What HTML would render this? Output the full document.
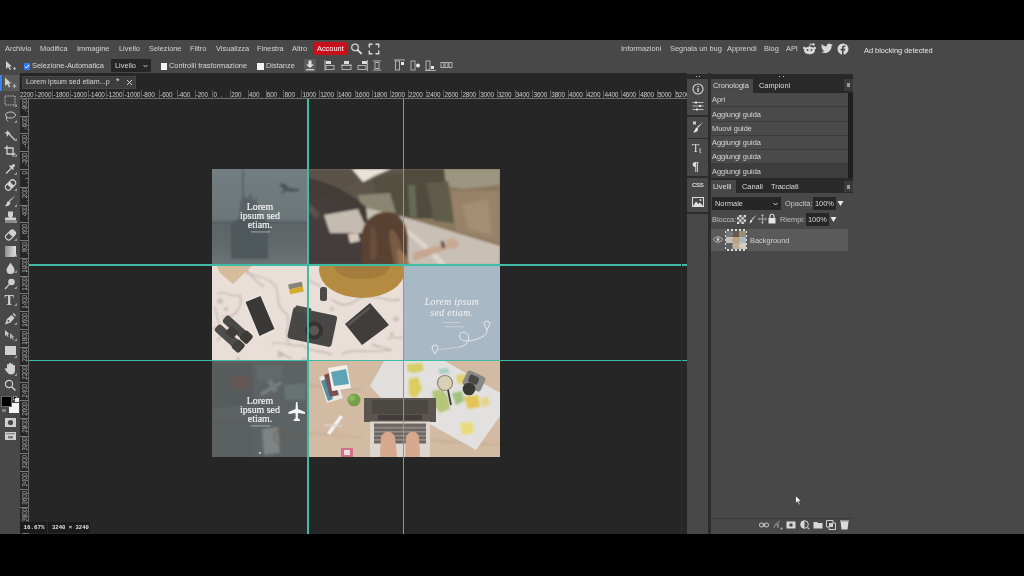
<!DOCTYPE html>
<html><head><meta charset="utf-8">
<style>
*{box-sizing:border-box;margin:0;padding:0}
html,body{width:1024px;height:576px;overflow:hidden;background:#000}
body{position:relative;font-family:"Liberation Sans",sans-serif;color:#dcdcdc}
.a{position:absolute}
.t{position:absolute;white-space:nowrap;font-size:7.4px;line-height:9px;color:#d8d8d8}
#app{left:0;top:40px;width:1024px;height:494px;background:#484848;filter:blur(0.45px)}
.rl{position:absolute;top:1.5px;font-size:6.4px;line-height:8px;color:#cdcdcd;white-space:nowrap;letter-spacing:-0.15px}
.rlv{position:absolute;left:1px;font-size:6.4px;line-height:7px;color:#a8a8a8;white-space:nowrap;writing-mode:vertical-rl;transform:rotate(180deg);letter-spacing:-0.15px}
.hr{left:0;width:137px;height:14.3px;background:#4a4a4a;border-bottom:1px solid #3b3b3b}
.menu span{position:absolute;top:4px;white-space:nowrap;font-size:7.4px;line-height:9px;color:#d4d4d4}
</style></head><body>
<div id="app" class="a">

  <!-- OPTIONS BAR -->
  <div class="a" style="left:0;top:16.7px;width:1024px;height:17px">
    <svg class="a" style="left:5px;top:4px" width="12" height="10" viewBox="0 0 12 10"><path d="M1 0 L1 8 L3 6 L5 9 L6 8.5 L4.5 5.5 L7 5.5 Z" fill="#cfcfcf"/><path d="M8 7.5h3M9.5 6v3" stroke="#cfcfcf" stroke-width="0.8"/></svg>
    <div class="a" style="left:24px;top:6px;width:6px;height:7px;background:#2f7cf6;border-radius:1px"></div>
    <svg class="a" style="left:24px;top:6px" width="6" height="7" viewBox="0 0 6 7"><path d="M1 3.5 L2.5 5 L5 1.8" stroke="#fff" stroke-width="1" fill="none"/></svg>
    <span class="t" style="left:32px;top:4px">Selezione-Automatica</span>
    <div class="a" style="left:111px;top:2px;width:40px;height:13px;background:#262626"></div>
    <span class="t" style="left:115px;top:4px">Livello</span>
    <svg class="a" style="left:143px;top:7px" width="5" height="4" viewBox="0 0 5 4"><path d="M0.5 1 L2.5 3 L4.5 1" stroke="#ddd" stroke-width="0.9" fill="none"/></svg>
    <div class="a" style="left:161px;top:6px;width:6px;height:7px;background:#f2f2f2"></div>
    <span class="t" style="left:169px;top:4px">Controlli trasformazione</span>
    <div class="a" style="left:257px;top:6px;width:7px;height:7px;background:#f2f2f2"></div>
    <span class="t" style="left:266px;top:4px">Distanze</span>
    <div class="a" style="left:304px;top:2px;width:12px;height:13px;background:#5a5a5a"></div>
    <svg class="a" style="left:305px;top:3px" width="10" height="11" viewBox="0 0 10 11"><path d="M3.5 0.5h3v4h2.5L5 8 1 4.5h2.5z" fill="#e0e0e0"/><rect x="1" y="9" width="8" height="1.3" fill="#d0d0d0"/></svg>
    <svg class="a" style="left:324px;top:3px" width="11" height="11" viewBox="0 0 11 11"><rect x="0.5" y="0" width="1" height="11" fill="#bbb"/><rect x="2" y="1" width="5" height="3" fill="#ddd"/><rect x="2" y="5.5" width="8" height="4" fill="none" stroke="#bbb" stroke-width="0.9"/></svg>
    <svg class="a" style="left:341px;top:3px" width="11" height="11" viewBox="0 0 11 11"><rect x="3" y="1" width="5" height="3" fill="#ddd"/><rect x="1" y="5.5" width="9" height="4" fill="none" stroke="#bbb" stroke-width="0.9"/><rect x="0" y="4.6" width="11" height="0.8" fill="#bbb"/></svg>
    <svg class="a" style="left:357px;top:3px" width="11" height="11" viewBox="0 0 11 11"><rect x="5" y="1" width="5" height="3" fill="#ddd"/><rect x="1" y="5.5" width="8" height="4" fill="none" stroke="#bbb" stroke-width="0.9"/><rect x="9.8" y="0" width="1" height="11" fill="#bbb"/></svg>
    <svg class="a" style="left:373px;top:3px" width="8" height="11" viewBox="0 0 8 11"><rect x="0" y="0.5" width="8" height="0.9" fill="#bbb"/><rect x="0" y="9.6" width="8" height="0.9" fill="#bbb"/><rect x="2" y="2.5" width="4" height="6" fill="none" stroke="#bbb" stroke-width="0.9"/></svg>
    <svg class="a" style="left:394px;top:2px" width="12" height="12" viewBox="0 0 12 12"><rect x="0" y="0.5" width="11" height="0.9" fill="#bbb"/><rect x="1.5" y="2" width="4" height="9" fill="none" stroke="#bbb" stroke-width="0.9"/><rect x="7" y="3" width="3" height="3" fill="#e8e8e8"/></svg>
    <svg class="a" style="left:410px;top:2px" width="11" height="12" viewBox="0 0 11 12"><rect x="1" y="2" width="4" height="9" fill="none" stroke="#bbb" stroke-width="0.9"/><circle cx="8" cy="6.5" r="2" fill="#e8e8e8"/></svg>
    <svg class="a" style="left:425px;top:2px" width="11" height="12" viewBox="0 0 11 12"><rect x="1" y="2" width="4" height="9" fill="none" stroke="#bbb" stroke-width="0.9"/><rect x="6" y="7" width="3" height="3" fill="#e8e8e8"/><rect x="0" y="11" width="11" height="0.9" fill="#bbb"/></svg>
    <svg class="a" style="left:440px;top:3px" width="13" height="10" viewBox="0 0 13 10"><rect x="1" y="2.5" width="3" height="5" fill="none" stroke="#bbb" stroke-width="0.9"/><rect x="5" y="2.5" width="3" height="5" fill="none" stroke="#bbb" stroke-width="0.9"/><rect x="9" y="2.5" width="3" height="5" fill="none" stroke="#bbb" stroke-width="0.9"/></svg>
  </div>

  <!-- LEFT TOOLBAR -->
  <div class="a" id="tools" style="left:0;top:33px;width:20px;height:461px;background:#484848">
    <div class="a" style="left:0;top:2px;width:2px;height:16px;background:#3a86f0"></div>
    <div class="a" style="left:3px;top:2px;width:16px;height:16px;background:#5a5a5a"></div>
    <svg class="a" style="left:4px;top:4px" width="13" height="12" viewBox="0 0 13 12"><path d="M1 0.5 L1 9 L3.2 7 L5 10.5 L6.3 9.8 L4.6 6.5 L7.5 6.5 Z" fill="#d0d0d0"/><path d="M8.5 9h4M10.5 7v4" stroke="#d0d0d0" stroke-width="0.8"/></svg>
    <svg class="a" style="left:4px;top:22px" width="13" height="12" viewBox="0 0 13 12"><rect x="1" y="1" width="10" height="9" fill="none" stroke="#d0d0d0" stroke-width="0.9" stroke-dasharray="1.5 1"/></svg><svg class="a" style="left:14px;top:31px" width="3" height="3" viewBox="0 0 3 3"><path d="M3 0V3H0Z" fill="#999"/></svg>
    <svg class="a" style="left:4px;top:38px" width="13" height="12" viewBox="0 0 13 12"><ellipse cx="6.5" cy="4" rx="5" ry="3" fill="none" stroke="#d0d0d0" stroke-width="0.9"/><path d="M2.5 6 C2 8 3 9 4 10.5" fill="none" stroke="#d0d0d0" stroke-width="0.9"/></svg><svg class="a" style="left:14px;top:47px" width="3" height="3" viewBox="0 0 3 3"><path d="M3 0V3H0Z" fill="#999"/></svg>
    <svg class="a" style="left:4px;top:56px" width="13" height="12" viewBox="0 0 13 12"><path d="M5 5 L11 11" stroke="#d0d0d0" stroke-width="1.2"/><path d="M3.5 1 L5 3.5 L7 4 L4.5 5.5 L3 8 L2.5 5 L0.5 3.5 L3 3Z" fill="#d0d0d0"/></svg><svg class="a" style="left:14px;top:65px" width="3" height="3" viewBox="0 0 3 3"><path d="M3 0V3H0Z" fill="#999"/></svg>
    <svg class="a" style="left:4px;top:72px" width="13" height="12" viewBox="0 0 13 12"><path d="M3 0.5V9H11.5M0.5 3H9V11.5" fill="none" stroke="#d0d0d0" stroke-width="1.3"/></svg><svg class="a" style="left:14px;top:81px" width="3" height="3" viewBox="0 0 3 3"><path d="M3 0V3H0Z" fill="#999"/></svg>
    <svg class="a" style="left:4px;top:90px" width="13" height="12" viewBox="0 0 13 12"><path d="M2 10.5 L7.5 5" stroke="#d0d0d0" stroke-width="1.3"/><path d="M7 3 L9.5 0.8 L11.3 2.6 L9 5 L10 6 L9 7 L5 3 L6 2Z" fill="#d0d0d0"/></svg><svg class="a" style="left:14px;top:99px" width="3" height="3" viewBox="0 0 3 3"><path d="M3 0V3H0Z" fill="#999"/></svg>
    <svg class="a" style="left:4px;top:106px" width="13" height="12" viewBox="0 0 13 12"><g transform="rotate(45 6.5 6)"><rect x="3.5" y="0" width="6" height="12" rx="3" fill="none" stroke="#d0d0d0" stroke-width="1.1"/><rect x="3.5" y="4" width="6" height="4" fill="#d0d0d0"/></g></svg><svg class="a" style="left:14px;top:115px" width="3" height="3" viewBox="0 0 3 3"><path d="M3 0V3H0Z" fill="#999"/></svg>
    <svg class="a" style="left:4px;top:122px" width="13" height="12" viewBox="0 0 13 12"><path d="M11.5 0.5 L6 6.5 L5 5.5Z" fill="#d0d0d0"/><path d="M4.6 6 C2.5 6.5 3 9.5 0.8 11.3 C4 11.5 6.8 9.8 6.3 7Z" fill="#d0d0d0"/></svg><svg class="a" style="left:14px;top:131px" width="3" height="3" viewBox="0 0 3 3"><path d="M3 0V3H0Z" fill="#999"/></svg>
    <svg class="a" style="left:4px;top:138px" width="13" height="12" viewBox="0 0 13 12"><path d="M4 0.5h5v4.5l-1 1.5h4v3H1v-3h4l-1-1.5z" fill="#d0d0d0"/><rect x="1" y="10.5" width="11" height="1" fill="#d0d0d0"/></svg><svg class="a" style="left:14px;top:147px" width="3" height="3" viewBox="0 0 3 3"><path d="M3 0V3H0Z" fill="#999"/></svg>
    <svg class="a" style="left:4px;top:156px" width="13" height="12" viewBox="0 0 13 12"><g transform="rotate(-45 6.5 6)"><rect x="1" y="3" width="11" height="6" rx="2.5" fill="none" stroke="#d0d0d0" stroke-width="1.1"/><rect x="6.5" y="3" width="5.5" height="6" rx="2" fill="#d0d0d0"/></g></svg><svg class="a" style="left:14px;top:165px" width="3" height="3" viewBox="0 0 3 3"><path d="M3 0V3H0Z" fill="#999"/></svg>
    <div class="a" style="left:5px;top:173px;width:11px;height:11px;background:linear-gradient(90deg,#909090,#e0e0e0)"></div><svg class="a" style="left:14px;top:181px" width="3" height="3" viewBox="0 0 3 3"><path d="M3 0V3H0Z" fill="#999"/></svg>
    <svg class="a" style="left:4px;top:189px" width="13" height="12" viewBox="0 0 13 12"><path d="M6.5 0.5 C8 3.5 10.5 5.5 10.5 8 A4 4 0 0 1 2.5 8 C2.5 5.5 5 3.5 6.5 0.5Z" fill="#d0d0d0"/></svg><svg class="a" style="left:14px;top:197px" width="3" height="3" viewBox="0 0 3 3"><path d="M3 0V3H0Z" fill="#999"/></svg>
    <svg class="a" style="left:4px;top:205px" width="13" height="12" viewBox="0 0 13 12"><circle cx="7.5" cy="4" r="3.3" fill="#d0d0d0"/><path d="M5.3 6.3 L1 11" stroke="#d0d0d0" stroke-width="1.2"/></svg><svg class="a" style="left:14px;top:213px" width="3" height="3" viewBox="0 0 3 3"><path d="M3 0V3H0Z" fill="#999"/></svg>
    <span class="a" style="left:4.5px;top:220px;font-family:'Liberation Serif',serif;font-size:14px;line-height:15px;color:#d0d0d0;font-weight:bold">T</span><svg class="a" style="left:14px;top:230px" width="3" height="3" viewBox="0 0 3 3"><path d="M3 0V3H0Z" fill="#999"/></svg>
    <svg class="a" style="left:4px;top:240px" width="13" height="12" viewBox="0 0 13 12"><path d="M1 11.5 L3 6 L7.5 2 L10.5 5 L6.5 9.5Z" fill="#d0d0d0"/><path d="M8.5 1 L9.5 0 L12 2.5 L11 3.5Z" fill="#d0d0d0"/><circle cx="4.5" cy="8" r="0.9" fill="#484848"/></svg><svg class="a" style="left:14px;top:249px" width="3" height="3" viewBox="0 0 3 3"><path d="M3 0V3H0Z" fill="#999"/></svg>
    <svg class="a" style="left:4px;top:256px" width="13" height="12" viewBox="0 0 13 12"><path d="M1 1 L1 7 L2.5 5.7 L3.8 8 L4.6 7.6 L3.5 5.2 L5.5 5.2Z" fill="#d0d0d0"/><path d="M6 4 L6 10 L7.5 8.7 L8.8 11 L9.6 10.6 L8.5 8.2 L10.5 8.2Z" fill="#d0d0d0" opacity="0.8"/></svg><svg class="a" style="left:14px;top:265px" width="3" height="3" viewBox="0 0 3 3"><path d="M3 0V3H0Z" fill="#999"/></svg>
    <div class="a" style="left:5px;top:273px;width:11px;height:9px;background:#d0d0d0"></div><svg class="a" style="left:14px;top:282px" width="3" height="3" viewBox="0 0 3 3"><path d="M3 0V3H0Z" fill="#999"/></svg>
    <svg class="a" style="left:4px;top:289px" width="13" height="13" viewBox="0 0 13 13"><path d="M3 7 V3 a1 1 0 0 1 2 0 V6 V1.8 a1 1 0 0 1 2 0 V6 V2.5 a1 1 0 0 1 2 0 V6.5 V4 a1 1 0 0 1 2 0 V8.5 C11 11 9.5 12.5 7 12.5 C5 12.5 4 11.5 3 10 L1 7.5 a1 1 0 0 1 1.5 -1.2Z" fill="#d0d0d0"/></svg><svg class="a" style="left:14px;top:300px" width="3" height="3" viewBox="0 0 3 3"><path d="M3 0V3H0Z" fill="#999"/></svg>
    <svg class="a" style="left:4px;top:306px" width="13" height="13" viewBox="0 0 13 13"><circle cx="5" cy="5" r="3.6" fill="none" stroke="#d0d0d0" stroke-width="1.2"/><path d="M7.7 7.7 L11.5 11.5" stroke="#d0d0d0" stroke-width="1.5"/></svg>
    <div class="a" style="left:9px;top:330px;width:10px;height:10px;background:#f4f4f4"></div>
    <div class="a" style="left:1px;top:323px;width:11px;height:11px;background:#000;border:0.5px solid #666"></div>
    <div class="a" style="left:13px;top:323px;width:4px;height:4px;background:#000;border:0.5px solid #888"></div><div class="a" style="left:15px;top:325px;width:4px;height:4px;background:#eee"></div>
    <div class="a" style="left:2px;top:336px;width:4px;height:3px;background:#aaa;opacity:0.6"></div>
    <svg class="a" style="left:4px;top:344px" width="13" height="11" viewBox="0 0 13 11"><rect x="1" y="1" width="11" height="9" fill="#d0d0d0"/><circle cx="6.5" cy="5.5" r="2.6" fill="#484848"/></svg>
    <svg class="a" style="left:4px;top:358px" width="13" height="10" viewBox="0 0 13 10"><rect x="1" y="1" width="11" height="8" fill="#d0d0d0"/><rect x="2" y="2.2" width="9" height="1" fill="#777"/><rect x="4" y="5" width="5" height="2.5" fill="#777"/></svg>
  </div>
  <!-- CANVAS AREA -->
  <div class="a" id="work" style="left:20px;top:33px;width:667px;height:461px;background:#262626;overflow:hidden">
    <div class="a" style="left:2px;top:2.5px;width:114px;height:13.5px;background:#3d3d3d;border:1px solid #474747"></div>
    <span class="t" style="left:6px;top:5px;color:#d6d6d6;font-size:7.1px">Lorem ipsum sed etiam...p</span>
    <span class="t" style="left:96px;top:4px;color:#e0e0e0;font-size:9px">*</span>
    <svg class="a" style="left:106px;top:6px" width="7" height="7" viewBox="0 0 7 7"><path d="M1 1L6 6M6 1L1 6" stroke="#d0d0d0" stroke-width="1"/></svg>
    <!-- h ruler -->
    <div class="a" id="hr" style="left:0;top:16px;width:667px;height:10px;background:#262626;border-bottom:1px solid #6c6c6c;overflow:hidden"><div class="a" style="left:-3.3px;top:1px;width:1px;height:9px;background:#5a5a5a"></div><span class="rl" style="left:-2.1px">-2200</span><div class="a" style="left:1.2px;top:8px;width:1px;height:2px;background:#555"></div><div class="a" style="left:5.6px;top:7px;width:1px;height:3px;background:#555"></div><div class="a" style="left:10.1px;top:8px;width:1px;height:2px;background:#555"></div><div class="a" style="left:14.5px;top:1px;width:1px;height:9px;background:#5a5a5a"></div><span class="rl" style="left:15.7px">-2000</span><div class="a" style="left:19.0px;top:8px;width:1px;height:2px;background:#555"></div><div class="a" style="left:23.4px;top:7px;width:1px;height:3px;background:#555"></div><div class="a" style="left:27.9px;top:8px;width:1px;height:2px;background:#555"></div><div class="a" style="left:32.3px;top:1px;width:1px;height:9px;background:#5a5a5a"></div><span class="rl" style="left:33.5px">-1800</span><div class="a" style="left:36.7px;top:8px;width:1px;height:2px;background:#555"></div><div class="a" style="left:41.2px;top:7px;width:1px;height:3px;background:#555"></div><div class="a" style="left:45.6px;top:8px;width:1px;height:2px;background:#555"></div><div class="a" style="left:50.1px;top:1px;width:1px;height:9px;background:#5a5a5a"></div><span class="rl" style="left:51.3px">-1600</span><div class="a" style="left:54.5px;top:8px;width:1px;height:2px;background:#555"></div><div class="a" style="left:59.0px;top:7px;width:1px;height:3px;background:#555"></div><div class="a" style="left:63.4px;top:8px;width:1px;height:2px;background:#555"></div><div class="a" style="left:67.9px;top:1px;width:1px;height:9px;background:#5a5a5a"></div><span class="rl" style="left:69.1px">-1400</span><div class="a" style="left:72.3px;top:8px;width:1px;height:2px;background:#555"></div><div class="a" style="left:76.7px;top:7px;width:1px;height:3px;background:#555"></div><div class="a" style="left:81.2px;top:8px;width:1px;height:2px;background:#555"></div><div class="a" style="left:85.6px;top:1px;width:1px;height:9px;background:#5a5a5a"></div><span class="rl" style="left:86.8px">-1200</span><div class="a" style="left:90.1px;top:8px;width:1px;height:2px;background:#555"></div><div class="a" style="left:94.5px;top:7px;width:1px;height:3px;background:#555"></div><div class="a" style="left:99.0px;top:8px;width:1px;height:2px;background:#555"></div><div class="a" style="left:103.4px;top:1px;width:1px;height:9px;background:#5a5a5a"></div><span class="rl" style="left:104.6px">-1000</span><div class="a" style="left:107.9px;top:8px;width:1px;height:2px;background:#555"></div><div class="a" style="left:112.3px;top:7px;width:1px;height:3px;background:#555"></div><div class="a" style="left:116.7px;top:8px;width:1px;height:2px;background:#555"></div><div class="a" style="left:121.2px;top:1px;width:1px;height:9px;background:#5a5a5a"></div><span class="rl" style="left:122.4px">-800</span><div class="a" style="left:125.6px;top:8px;width:1px;height:2px;background:#555"></div><div class="a" style="left:130.1px;top:7px;width:1px;height:3px;background:#555"></div><div class="a" style="left:134.5px;top:8px;width:1px;height:2px;background:#555"></div><div class="a" style="left:139.0px;top:1px;width:1px;height:9px;background:#5a5a5a"></div><span class="rl" style="left:140.2px">-600</span><div class="a" style="left:143.4px;top:8px;width:1px;height:2px;background:#555"></div><div class="a" style="left:147.9px;top:7px;width:1px;height:3px;background:#555"></div><div class="a" style="left:152.3px;top:8px;width:1px;height:2px;background:#555"></div><div class="a" style="left:156.7px;top:1px;width:1px;height:9px;background:#5a5a5a"></div><span class="rl" style="left:157.9px">-400</span><div class="a" style="left:161.2px;top:8px;width:1px;height:2px;background:#555"></div><div class="a" style="left:165.6px;top:7px;width:1px;height:3px;background:#555"></div><div class="a" style="left:170.1px;top:8px;width:1px;height:2px;background:#555"></div><div class="a" style="left:174.5px;top:1px;width:1px;height:9px;background:#5a5a5a"></div><span class="rl" style="left:175.7px">-200</span><div class="a" style="left:179.0px;top:8px;width:1px;height:2px;background:#555"></div><div class="a" style="left:183.4px;top:7px;width:1px;height:3px;background:#555"></div><div class="a" style="left:187.9px;top:8px;width:1px;height:2px;background:#555"></div><div class="a" style="left:192.3px;top:1px;width:1px;height:9px;background:#5a5a5a"></div><span class="rl" style="left:193.5px">0</span><div class="a" style="left:196.7px;top:8px;width:1px;height:2px;background:#555"></div><div class="a" style="left:201.2px;top:7px;width:1px;height:3px;background:#555"></div><div class="a" style="left:205.6px;top:8px;width:1px;height:2px;background:#555"></div><div class="a" style="left:210.1px;top:1px;width:1px;height:9px;background:#5a5a5a"></div><span class="rl" style="left:211.3px">200</span><div class="a" style="left:214.5px;top:8px;width:1px;height:2px;background:#555"></div><div class="a" style="left:219.0px;top:7px;width:1px;height:3px;background:#555"></div><div class="a" style="left:223.4px;top:8px;width:1px;height:2px;background:#555"></div><div class="a" style="left:227.9px;top:1px;width:1px;height:9px;background:#5a5a5a"></div><span class="rl" style="left:229.1px">400</span><div class="a" style="left:232.3px;top:8px;width:1px;height:2px;background:#555"></div><div class="a" style="left:236.7px;top:7px;width:1px;height:3px;background:#555"></div><div class="a" style="left:241.2px;top:8px;width:1px;height:2px;background:#555"></div><div class="a" style="left:245.6px;top:1px;width:1px;height:9px;background:#5a5a5a"></div><span class="rl" style="left:246.8px">600</span><div class="a" style="left:250.1px;top:8px;width:1px;height:2px;background:#555"></div><div class="a" style="left:254.5px;top:7px;width:1px;height:3px;background:#555"></div><div class="a" style="left:259.0px;top:8px;width:1px;height:2px;background:#555"></div><div class="a" style="left:263.4px;top:1px;width:1px;height:9px;background:#5a5a5a"></div><span class="rl" style="left:264.6px">800</span><div class="a" style="left:267.9px;top:8px;width:1px;height:2px;background:#555"></div><div class="a" style="left:272.3px;top:7px;width:1px;height:3px;background:#555"></div><div class="a" style="left:276.7px;top:8px;width:1px;height:2px;background:#555"></div><div class="a" style="left:281.2px;top:1px;width:1px;height:9px;background:#5a5a5a"></div><span class="rl" style="left:282.4px">1000</span><div class="a" style="left:285.6px;top:8px;width:1px;height:2px;background:#555"></div><div class="a" style="left:290.1px;top:7px;width:1px;height:3px;background:#555"></div><div class="a" style="left:294.5px;top:8px;width:1px;height:2px;background:#555"></div><div class="a" style="left:299.0px;top:1px;width:1px;height:9px;background:#5a5a5a"></div><span class="rl" style="left:300.2px">1200</span><div class="a" style="left:303.4px;top:8px;width:1px;height:2px;background:#555"></div><div class="a" style="left:307.9px;top:7px;width:1px;height:3px;background:#555"></div><div class="a" style="left:312.3px;top:8px;width:1px;height:2px;background:#555"></div><div class="a" style="left:316.7px;top:1px;width:1px;height:9px;background:#5a5a5a"></div><span class="rl" style="left:317.9px">1400</span><div class="a" style="left:321.2px;top:8px;width:1px;height:2px;background:#555"></div><div class="a" style="left:325.6px;top:7px;width:1px;height:3px;background:#555"></div><div class="a" style="left:330.1px;top:8px;width:1px;height:2px;background:#555"></div><div class="a" style="left:334.5px;top:1px;width:1px;height:9px;background:#5a5a5a"></div><span class="rl" style="left:335.7px">1600</span><div class="a" style="left:339.0px;top:8px;width:1px;height:2px;background:#555"></div><div class="a" style="left:343.4px;top:7px;width:1px;height:3px;background:#555"></div><div class="a" style="left:347.9px;top:8px;width:1px;height:2px;background:#555"></div><div class="a" style="left:352.3px;top:1px;width:1px;height:9px;background:#5a5a5a"></div><span class="rl" style="left:353.5px">1800</span><div class="a" style="left:356.7px;top:8px;width:1px;height:2px;background:#555"></div><div class="a" style="left:361.2px;top:7px;width:1px;height:3px;background:#555"></div><div class="a" style="left:365.6px;top:8px;width:1px;height:2px;background:#555"></div><div class="a" style="left:370.1px;top:1px;width:1px;height:9px;background:#5a5a5a"></div><span class="rl" style="left:371.3px">2000</span><div class="a" style="left:374.5px;top:8px;width:1px;height:2px;background:#555"></div><div class="a" style="left:379.0px;top:7px;width:1px;height:3px;background:#555"></div><div class="a" style="left:383.4px;top:8px;width:1px;height:2px;background:#555"></div><div class="a" style="left:387.9px;top:1px;width:1px;height:9px;background:#5a5a5a"></div><span class="rl" style="left:389.1px">2200</span><div class="a" style="left:392.3px;top:8px;width:1px;height:2px;background:#555"></div><div class="a" style="left:396.7px;top:7px;width:1px;height:3px;background:#555"></div><div class="a" style="left:401.2px;top:8px;width:1px;height:2px;background:#555"></div><div class="a" style="left:405.6px;top:1px;width:1px;height:9px;background:#5a5a5a"></div><span class="rl" style="left:406.8px">2400</span><div class="a" style="left:410.1px;top:8px;width:1px;height:2px;background:#555"></div><div class="a" style="left:414.5px;top:7px;width:1px;height:3px;background:#555"></div><div class="a" style="left:419.0px;top:8px;width:1px;height:2px;background:#555"></div><div class="a" style="left:423.4px;top:1px;width:1px;height:9px;background:#5a5a5a"></div><span class="rl" style="left:424.6px">2600</span><div class="a" style="left:427.9px;top:8px;width:1px;height:2px;background:#555"></div><div class="a" style="left:432.3px;top:7px;width:1px;height:3px;background:#555"></div><div class="a" style="left:436.7px;top:8px;width:1px;height:2px;background:#555"></div><div class="a" style="left:441.2px;top:1px;width:1px;height:9px;background:#5a5a5a"></div><span class="rl" style="left:442.4px">2800</span><div class="a" style="left:445.6px;top:8px;width:1px;height:2px;background:#555"></div><div class="a" style="left:450.1px;top:7px;width:1px;height:3px;background:#555"></div><div class="a" style="left:454.5px;top:8px;width:1px;height:2px;background:#555"></div><div class="a" style="left:459.0px;top:1px;width:1px;height:9px;background:#5a5a5a"></div><span class="rl" style="left:460.2px">3000</span><div class="a" style="left:463.4px;top:8px;width:1px;height:2px;background:#555"></div><div class="a" style="left:467.9px;top:7px;width:1px;height:3px;background:#555"></div><div class="a" style="left:472.3px;top:8px;width:1px;height:2px;background:#555"></div><div class="a" style="left:476.7px;top:1px;width:1px;height:9px;background:#5a5a5a"></div><span class="rl" style="left:477.9px">3200</span><div class="a" style="left:481.2px;top:8px;width:1px;height:2px;background:#555"></div><div class="a" style="left:485.6px;top:7px;width:1px;height:3px;background:#555"></div><div class="a" style="left:490.1px;top:8px;width:1px;height:2px;background:#555"></div><div class="a" style="left:494.5px;top:1px;width:1px;height:9px;background:#5a5a5a"></div><span class="rl" style="left:495.7px">3400</span><div class="a" style="left:499.0px;top:8px;width:1px;height:2px;background:#555"></div><div class="a" style="left:503.4px;top:7px;width:1px;height:3px;background:#555"></div><div class="a" style="left:507.9px;top:8px;width:1px;height:2px;background:#555"></div><div class="a" style="left:512.3px;top:1px;width:1px;height:9px;background:#5a5a5a"></div><span class="rl" style="left:513.5px">3600</span><div class="a" style="left:516.7px;top:8px;width:1px;height:2px;background:#555"></div><div class="a" style="left:521.2px;top:7px;width:1px;height:3px;background:#555"></div><div class="a" style="left:525.6px;top:8px;width:1px;height:2px;background:#555"></div><div class="a" style="left:530.1px;top:1px;width:1px;height:9px;background:#5a5a5a"></div><span class="rl" style="left:531.3px">3800</span><div class="a" style="left:534.5px;top:8px;width:1px;height:2px;background:#555"></div><div class="a" style="left:539.0px;top:7px;width:1px;height:3px;background:#555"></div><div class="a" style="left:543.4px;top:8px;width:1px;height:2px;background:#555"></div><div class="a" style="left:547.9px;top:1px;width:1px;height:9px;background:#5a5a5a"></div><span class="rl" style="left:549.1px">4000</span><div class="a" style="left:552.3px;top:8px;width:1px;height:2px;background:#555"></div><div class="a" style="left:556.7px;top:7px;width:1px;height:3px;background:#555"></div><div class="a" style="left:561.2px;top:8px;width:1px;height:2px;background:#555"></div><div class="a" style="left:565.6px;top:1px;width:1px;height:9px;background:#5a5a5a"></div><span class="rl" style="left:566.8px">4200</span><div class="a" style="left:570.1px;top:8px;width:1px;height:2px;background:#555"></div><div class="a" style="left:574.5px;top:7px;width:1px;height:3px;background:#555"></div><div class="a" style="left:579.0px;top:8px;width:1px;height:2px;background:#555"></div><div class="a" style="left:583.4px;top:1px;width:1px;height:9px;background:#5a5a5a"></div><span class="rl" style="left:584.6px">4400</span><div class="a" style="left:587.9px;top:8px;width:1px;height:2px;background:#555"></div><div class="a" style="left:592.3px;top:7px;width:1px;height:3px;background:#555"></div><div class="a" style="left:596.7px;top:8px;width:1px;height:2px;background:#555"></div><div class="a" style="left:601.2px;top:1px;width:1px;height:9px;background:#5a5a5a"></div><span class="rl" style="left:602.4px">4600</span><div class="a" style="left:605.6px;top:8px;width:1px;height:2px;background:#555"></div><div class="a" style="left:610.1px;top:7px;width:1px;height:3px;background:#555"></div><div class="a" style="left:614.5px;top:8px;width:1px;height:2px;background:#555"></div><div class="a" style="left:619.0px;top:1px;width:1px;height:9px;background:#5a5a5a"></div><span class="rl" style="left:620.2px">4800</span><div class="a" style="left:623.4px;top:8px;width:1px;height:2px;background:#555"></div><div class="a" style="left:627.9px;top:7px;width:1px;height:3px;background:#555"></div><div class="a" style="left:632.3px;top:8px;width:1px;height:2px;background:#555"></div><div class="a" style="left:636.7px;top:1px;width:1px;height:9px;background:#5a5a5a"></div><span class="rl" style="left:637.9px">5000</span><div class="a" style="left:641.2px;top:8px;width:1px;height:2px;background:#555"></div><div class="a" style="left:645.6px;top:7px;width:1px;height:3px;background:#555"></div><div class="a" style="left:650.1px;top:8px;width:1px;height:2px;background:#555"></div><div class="a" style="left:654.5px;top:1px;width:1px;height:9px;background:#5a5a5a"></div><span class="rl" style="left:655.7px">5200</span><div class="a" style="left:659.0px;top:8px;width:1px;height:2px;background:#555"></div><div class="a" style="left:663.4px;top:7px;width:1px;height:3px;background:#555"></div><div class="a" style="left:667.9px;top:8px;width:1px;height:2px;background:#555"></div>
    </div>
    <!-- v ruler -->
    <div class="a" id="vr" style="left:0;top:26px;width:9px;height:435px;background:#262626;border-right:1px solid #6c6c6c;overflow:hidden"><div class="a" style="left:0px;top:-1.1px;width:9px;height:1px;background:#7a7a7a"></div><span class="rlv" style="top:0.4px">-800</span><div class="a" style="left:7px;top:3.3px;width:2px;height:1px;background:#6a6a6a"></div><div class="a" style="left:5px;top:7.8px;width:4px;height:1px;background:#6a6a6a"></div><div class="a" style="left:7px;top:12.2px;width:2px;height:1px;background:#6a6a6a"></div><div class="a" style="left:0px;top:16.7px;width:9px;height:1px;background:#7a7a7a"></div><span class="rlv" style="top:18.2px">-600</span><div class="a" style="left:7px;top:21.1px;width:2px;height:1px;background:#6a6a6a"></div><div class="a" style="left:5px;top:25.6px;width:4px;height:1px;background:#6a6a6a"></div><div class="a" style="left:7px;top:30.0px;width:2px;height:1px;background:#6a6a6a"></div><div class="a" style="left:0px;top:34.4px;width:9px;height:1px;background:#7a7a7a"></div><span class="rlv" style="top:35.9px">-400</span><div class="a" style="left:7px;top:38.9px;width:2px;height:1px;background:#6a6a6a"></div><div class="a" style="left:5px;top:43.3px;width:4px;height:1px;background:#6a6a6a"></div><div class="a" style="left:7px;top:47.8px;width:2px;height:1px;background:#6a6a6a"></div><div class="a" style="left:0px;top:52.2px;width:9px;height:1px;background:#7a7a7a"></div><span class="rlv" style="top:53.7px">-200</span><div class="a" style="left:7px;top:56.7px;width:2px;height:1px;background:#6a6a6a"></div><div class="a" style="left:5px;top:61.1px;width:4px;height:1px;background:#6a6a6a"></div><div class="a" style="left:7px;top:65.6px;width:2px;height:1px;background:#6a6a6a"></div><div class="a" style="left:0px;top:70.0px;width:9px;height:1px;background:#7a7a7a"></div><span class="rlv" style="top:71.5px">0</span><div class="a" style="left:7px;top:74.4px;width:2px;height:1px;background:#6a6a6a"></div><div class="a" style="left:5px;top:78.9px;width:4px;height:1px;background:#6a6a6a"></div><div class="a" style="left:7px;top:83.3px;width:2px;height:1px;background:#6a6a6a"></div><div class="a" style="left:0px;top:87.8px;width:9px;height:1px;background:#7a7a7a"></div><span class="rlv" style="top:89.3px">200</span><div class="a" style="left:7px;top:92.2px;width:2px;height:1px;background:#6a6a6a"></div><div class="a" style="left:5px;top:96.7px;width:4px;height:1px;background:#6a6a6a"></div><div class="a" style="left:7px;top:101.1px;width:2px;height:1px;background:#6a6a6a"></div><div class="a" style="left:0px;top:105.6px;width:9px;height:1px;background:#7a7a7a"></div><span class="rlv" style="top:107.1px">400</span><div class="a" style="left:7px;top:110.0px;width:2px;height:1px;background:#6a6a6a"></div><div class="a" style="left:5px;top:114.4px;width:4px;height:1px;background:#6a6a6a"></div><div class="a" style="left:7px;top:118.9px;width:2px;height:1px;background:#6a6a6a"></div><div class="a" style="left:0px;top:123.3px;width:9px;height:1px;background:#7a7a7a"></div><span class="rlv" style="top:124.8px">600</span><div class="a" style="left:7px;top:127.8px;width:2px;height:1px;background:#6a6a6a"></div><div class="a" style="left:5px;top:132.2px;width:4px;height:1px;background:#6a6a6a"></div><div class="a" style="left:7px;top:136.7px;width:2px;height:1px;background:#6a6a6a"></div><div class="a" style="left:0px;top:141.1px;width:9px;height:1px;background:#7a7a7a"></div><span class="rlv" style="top:142.6px">800</span><div class="a" style="left:7px;top:145.6px;width:2px;height:1px;background:#6a6a6a"></div><div class="a" style="left:5px;top:150.0px;width:4px;height:1px;background:#6a6a6a"></div><div class="a" style="left:7px;top:154.4px;width:2px;height:1px;background:#6a6a6a"></div><div class="a" style="left:0px;top:158.9px;width:9px;height:1px;background:#7a7a7a"></div><span class="rlv" style="top:160.4px">1000</span><div class="a" style="left:7px;top:163.3px;width:2px;height:1px;background:#6a6a6a"></div><div class="a" style="left:5px;top:167.8px;width:4px;height:1px;background:#6a6a6a"></div><div class="a" style="left:7px;top:172.2px;width:2px;height:1px;background:#6a6a6a"></div><div class="a" style="left:0px;top:176.7px;width:9px;height:1px;background:#7a7a7a"></div><span class="rlv" style="top:178.2px">1200</span><div class="a" style="left:7px;top:181.1px;width:2px;height:1px;background:#6a6a6a"></div><div class="a" style="left:5px;top:185.6px;width:4px;height:1px;background:#6a6a6a"></div><div class="a" style="left:7px;top:190.0px;width:2px;height:1px;background:#6a6a6a"></div><div class="a" style="left:0px;top:194.4px;width:9px;height:1px;background:#7a7a7a"></div><span class="rlv" style="top:195.9px">1400</span><div class="a" style="left:7px;top:198.9px;width:2px;height:1px;background:#6a6a6a"></div><div class="a" style="left:5px;top:203.3px;width:4px;height:1px;background:#6a6a6a"></div><div class="a" style="left:7px;top:207.8px;width:2px;height:1px;background:#6a6a6a"></div><div class="a" style="left:0px;top:212.2px;width:9px;height:1px;background:#7a7a7a"></div><span class="rlv" style="top:213.7px">1600</span><div class="a" style="left:7px;top:216.7px;width:2px;height:1px;background:#6a6a6a"></div><div class="a" style="left:5px;top:221.1px;width:4px;height:1px;background:#6a6a6a"></div><div class="a" style="left:7px;top:225.6px;width:2px;height:1px;background:#6a6a6a"></div><div class="a" style="left:0px;top:230.0px;width:9px;height:1px;background:#7a7a7a"></div><span class="rlv" style="top:231.5px">1800</span><div class="a" style="left:7px;top:234.4px;width:2px;height:1px;background:#6a6a6a"></div><div class="a" style="left:5px;top:238.9px;width:4px;height:1px;background:#6a6a6a"></div><div class="a" style="left:7px;top:243.3px;width:2px;height:1px;background:#6a6a6a"></div><div class="a" style="left:0px;top:247.8px;width:9px;height:1px;background:#7a7a7a"></div><span class="rlv" style="top:249.3px">2000</span><div class="a" style="left:7px;top:252.2px;width:2px;height:1px;background:#6a6a6a"></div><div class="a" style="left:5px;top:256.7px;width:4px;height:1px;background:#6a6a6a"></div><div class="a" style="left:7px;top:261.1px;width:2px;height:1px;background:#6a6a6a"></div><div class="a" style="left:0px;top:265.6px;width:9px;height:1px;background:#7a7a7a"></div><span class="rlv" style="top:267.1px">2200</span><div class="a" style="left:7px;top:270.0px;width:2px;height:1px;background:#6a6a6a"></div><div class="a" style="left:5px;top:274.4px;width:4px;height:1px;background:#6a6a6a"></div><div class="a" style="left:7px;top:278.9px;width:2px;height:1px;background:#6a6a6a"></div><div class="a" style="left:0px;top:283.3px;width:9px;height:1px;background:#7a7a7a"></div><span class="rlv" style="top:284.8px">2400</span><div class="a" style="left:7px;top:287.8px;width:2px;height:1px;background:#6a6a6a"></div><div class="a" style="left:5px;top:292.2px;width:4px;height:1px;background:#6a6a6a"></div><div class="a" style="left:7px;top:296.7px;width:2px;height:1px;background:#6a6a6a"></div><div class="a" style="left:0px;top:301.1px;width:9px;height:1px;background:#7a7a7a"></div><span class="rlv" style="top:302.6px">2600</span><div class="a" style="left:7px;top:305.6px;width:2px;height:1px;background:#6a6a6a"></div><div class="a" style="left:5px;top:310.0px;width:4px;height:1px;background:#6a6a6a"></div><div class="a" style="left:7px;top:314.4px;width:2px;height:1px;background:#6a6a6a"></div><div class="a" style="left:0px;top:318.9px;width:9px;height:1px;background:#7a7a7a"></div><span class="rlv" style="top:320.4px">2800</span><div class="a" style="left:7px;top:323.3px;width:2px;height:1px;background:#6a6a6a"></div><div class="a" style="left:5px;top:327.8px;width:4px;height:1px;background:#6a6a6a"></div><div class="a" style="left:7px;top:332.2px;width:2px;height:1px;background:#6a6a6a"></div><div class="a" style="left:0px;top:336.7px;width:9px;height:1px;background:#7a7a7a"></div><span class="rlv" style="top:338.2px">3000</span><div class="a" style="left:7px;top:341.1px;width:2px;height:1px;background:#6a6a6a"></div><div class="a" style="left:5px;top:345.6px;width:4px;height:1px;background:#6a6a6a"></div><div class="a" style="left:7px;top:350.0px;width:2px;height:1px;background:#6a6a6a"></div><div class="a" style="left:0px;top:354.4px;width:9px;height:1px;background:#7a7a7a"></div><span class="rlv" style="top:355.9px">3200</span><div class="a" style="left:7px;top:358.9px;width:2px;height:1px;background:#6a6a6a"></div><div class="a" style="left:5px;top:363.3px;width:4px;height:1px;background:#6a6a6a"></div><div class="a" style="left:7px;top:367.8px;width:2px;height:1px;background:#6a6a6a"></div><div class="a" style="left:0px;top:372.2px;width:9px;height:1px;background:#7a7a7a"></div><span class="rlv" style="top:373.7px">3400</span><div class="a" style="left:7px;top:376.7px;width:2px;height:1px;background:#6a6a6a"></div><div class="a" style="left:5px;top:381.1px;width:4px;height:1px;background:#6a6a6a"></div><div class="a" style="left:7px;top:385.6px;width:2px;height:1px;background:#6a6a6a"></div><div class="a" style="left:0px;top:390.0px;width:9px;height:1px;background:#7a7a7a"></div><span class="rlv" style="top:391.5px">3600</span><div class="a" style="left:7px;top:394.4px;width:2px;height:1px;background:#6a6a6a"></div><div class="a" style="left:5px;top:398.9px;width:4px;height:1px;background:#6a6a6a"></div><div class="a" style="left:7px;top:403.3px;width:2px;height:1px;background:#6a6a6a"></div><div class="a" style="left:0px;top:407.8px;width:9px;height:1px;background:#7a7a7a"></div><span class="rlv" style="top:409.3px">3800</span><div class="a" style="left:7px;top:412.2px;width:2px;height:1px;background:#6a6a6a"></div><div class="a" style="left:5px;top:416.7px;width:4px;height:1px;background:#6a6a6a"></div><div class="a" style="left:7px;top:421.1px;width:2px;height:1px;background:#6a6a6a"></div><div class="a" style="left:0px;top:425.6px;width:9px;height:1px;background:#7a7a7a"></div><span class="rlv" style="top:427.1px">4000</span><div class="a" style="left:7px;top:430.0px;width:2px;height:1px;background:#6a6a6a"></div><div class="a" style="left:5px;top:434.4px;width:4px;height:1px;background:#6a6a6a"></div><div class="a" style="left:7px;top:438.9px;width:2px;height:1px;background:#6a6a6a"></div>
    </div>
    <svg class="a" style="left:192px;top:96px" width="288" height="288" viewBox="0 0 288 288">
<defs>
  <filter id="b1" x="-20%" y="-20%" width="140%" height="140%"><feGaussianBlur stdDeviation="1.2"/></filter>
  <filter id="b2" x="-20%" y="-20%" width="140%" height="140%"><feGaussianBlur stdDeviation="2.5"/></filter>
  <filter id="b05"><feGaussianBlur stdDeviation="0.5"/></filter>
  <clipPath id="c00"><rect x="0" y="0" width="96" height="96"/></clipPath>
  <clipPath id="c01"><rect x="96" y="0" width="192" height="96"/></clipPath>
  <clipPath id="c10"><rect x="0" y="96" width="192" height="96"/></clipPath>
  <clipPath id="c20"><rect x="0" y="192" width="96" height="96"/></clipPath>
  <clipPath id="c21"><rect x="96" y="192" width="192" height="96"/></clipPath>
  <linearGradient id="g00" x1="0" y1="0" x2="0" y2="1"><stop offset="0" stop-color="#737e82"/><stop offset="0.55" stop-color="#6c7679"/><stop offset="0.6" stop-color="#5d6567"/><stop offset="0.8" stop-color="#62696b"/><stop offset="1" stop-color="#6e7577"/></linearGradient>
</defs>
<!-- cell 0,0 : grey overlay -->
<g clip-path="url(#c00)">
  <rect x="0" y="0" width="96" height="96" fill="url(#g00)"/>
  <g filter="url(#b1)">
    <rect x="30" y="0" width="2" height="56" fill="#5a6366"/>
    <rect x="0" y="52" width="96" height="4" fill="#596163"/>
    <path d="M67 15 L71 14 L78 19 L86 20 L88 22 L79 23 L74 22 L70 25 L69 23 L72 21Z" fill="#4d5558"/>
    <path d="M19 58 C19 52 25 50 29 50 L51 50 C55 50 56 54 56 58 L56 90 L19 90Z" fill="#50585a"/>
    <path d="M28 34 L31 26 L35 30 L39 24 L41 32 L45 28 L47 50 L27 50Z" fill="#5a6265"/>
  </g>
</g>
<!-- row0 cols1-2 : car photo -->
<g clip-path="url(#c01)">
  <rect x="96" y="0" width="192" height="96" fill="#7e7462"/>
  <g filter="url(#b1)">
    <!-- cell 0,2 hills -->
    <path d="M192 0 L288 0 L288 77 L192 49Z" fill="#8c785e"/>
    <path d="M205 0 L288 0 L288 16 L250 20 L220 14 L205 8Z" fill="#9c9580"/>
    <path d="M192 0 L232 0 L238 50 L192 49Z" fill="#4f4c3c"/>
    <path d="M214 14 L236 12 L242 54 L222 52Z" fill="#5f5c4a"/>
    <path d="M240 22 L288 22 L288 74 L244 62Z" fill="#98826a"/>
    <path d="M250 36 L276 30 L280 66 L256 60Z" fill="#a48d72"/>
    <path d="M196 16 L203 16 L205 48 L198 48Z" fill="#676a55"/>
    <!-- cell 0,1 mountains -->
    <path d="M96 0 L140 0 L152 13 L178 0 L192 0 L192 49 L96 49Z" fill="#5d554a"/>
    <path d="M160 10 L192 4 L192 45 L170 42Z" fill="#55503f"/>
    <path d="M146 26 L178 24 L184 44 L150 42Z" fill="#8a8672"/>
    <path d="M96 0 L140 0 L150 12 L120 24 L96 24Z" fill="#5a5146"/>
    <!-- sky -->
    <path d="M140 0 L179 0 L164 6 L151 13Z" fill="#e8e3da"/>
    <!-- road -->
    <path d="M150 38 L192 48 L288 77 L288 96 L160 96Z" fill="#c8c0b5"/>
    <path d="M192 58 C210 70 225 85 235 96 L228 96 C218 86 204 72 192 62Z" fill="#ddd6cd"/>
    <!-- car -->
    <path d="M96 9 C120 14 140 25 154 38 L156 54 L148 54 C136 40 118 30 96 23Z" fill="#423b37"/>
    <path d="M96 23 C118 30 136 40 150 54 L152 96 L96 96Z" fill="#453e3a"/>
    <path d="M96 33 L108 45 L104 50 L96 42Z" fill="#5a524c"/>
    <path d="M112 46 L146 40 L153 56 L150 64 L118 64Z" fill="#c4bcb1"/>
    <path d="M136 65 L146 64 L148 72 L138 74Z" fill="#d8c8bb"/>
    <!-- hair -->
    <path d="M150 96 L149 70 C150 52 162 42 176 43 C190 44 196 58 196 72 L196 96Z" fill="#5a4233"/>
    <path d="M178 60 C186 62 190 75 192 96 L182 96 C180 82 176 70 178 60Z" fill="#7a5a42"/>
    <path d="M160 56 C164 60 166 72 164 90 L158 90 C158 76 158 64 160 56Z" fill="#6a4d3a"/>
    <path d="M185 80 C192 82 196 90 198 96 L186 96Z" fill="#957452"/>
    <!-- arm -->
    <path d="M200 84 L234 74 L236 80 L202 92Z" fill="#c7a792"/>
    <ellipse cx="240" cy="74.5" rx="6.5" ry="5.5" fill="#caa994"/>
    <rect x="229" y="72" width="3.5" height="7" fill="#5a5650" transform="rotate(-15 231 75)"/>
  </g>
</g>
<!-- row1 cols0-1 : map flat lay -->
<g clip-path="url(#c10)">
  <rect x="0" y="96" width="192" height="96" fill="#e9dfd8"/>
  <g filter="url(#b1)" fill="none" stroke="#a89c94" stroke-width="1.1" opacity="0.75">
    <path d="M30 100 C40 110 50 104 62 115 C70 125 60 135 75 145 C80 155 70 165 78 175"/>
    <path d="M5 125 C12 120 20 130 28 126 C32 140 20 150 10 148"/>
    <path d="M120 130 C130 140 140 135 150 128 C165 125 180 135 188 130"/>
    <path d="M0 160 C8 155 12 165 5 172"/>
    <path d="M60 175 C70 170 80 180 90 176 C100 185 110 180 120 186"/>
    <path d="M130 185 C140 178 160 186 180 180"/>
    <path d="M176 170 C182 165 186 172 190 168"/>
    <path d="M34 100 C38 106 44 112 52 118"/>
    <path d="M2 138 C6 142 4 150 8 156"/>
    <path d="M66 182 C70 186 76 188 80 190"/>
    <path d="M96 110 C100 116 104 112 108 118"/>
    <path d="M160 175 C166 180 172 176 178 182"/>
  </g>
  <g filter="url(#b1)" fill="#b0a49c" opacity="0.55">
    <circle cx="8" cy="132" r="3"/><circle cx="14" cy="140" r="2"/><circle cx="68" cy="186" r="2.5"/>
    <circle cx="184" cy="150" r="2.5"/><circle cx="180" cy="165" r="2"/><circle cx="120" cy="140" r="2"/>
    <circle cx="26" cy="190" r="2"/><circle cx="92" cy="190" r="2"/>
  </g>
  <g filter="url(#b05)">
    <!-- kraft paper -->
    <path d="M4 96 L41 96 L21 115 L8 104Z" fill="#d4bc9c"/>
    <!-- hat -->
    <ellipse cx="150" cy="101" rx="43" ry="28" fill="#b58b42"/>
    <path d="M122 96 L178 96 C176 106 166 110 150 110 C134 110 124 106 122 96Z" fill="#a47d3c"/>
    <!-- phone -->
    <path d="M32 132 L49 125 L64 161 L47 169Z" fill="#ece8e4"/>
    <path d="M33.5 133 L48.5 127 L62.5 160 L47.5 167Z" fill="#3a3938"/>
    <!-- binoculars -->
    <g transform="rotate(42 21 165)">
      <rect x="4" y="154" width="34" height="9" rx="3" fill="#4b4845"/>
      <rect x="4" y="166" width="34" height="9" rx="3" fill="#504d4a"/>
      <rect x="14" y="160" width="10" height="9" fill="#3f3c3a"/>
      <rect x="28" y="153" width="10" height="11" rx="2" fill="#3e3b39"/>
      <rect x="28" y="165" width="10" height="11" rx="2" fill="#423f3d"/>
    </g>
    <!-- film roll -->
    <g transform="rotate(-12 84 119)"><rect x="77" y="114" width="14" height="5" fill="#8a8478"/><rect x="77" y="119" width="14" height="5" fill="#d2ac2c"/></g>
    <!-- camera -->
    <g transform="rotate(12 100 157)">
      <rect x="78" y="142" width="45" height="32" rx="3" fill="#4a4744"/>
      <rect x="80" y="140" width="16" height="6" rx="1" fill="#504d4a"/>
      <circle cx="103" cy="161" r="9" fill="#353331"/>
      <circle cx="103" cy="161" r="5" fill="#5a5753"/>
    </g>
    <!-- lens cap -->
    <rect x="108" y="118" width="7" height="14" rx="2.5" fill="#4d4a47"/>
    <!-- wallet -->
    <path d="M133 155 L158 134 L177 156 L150 176Z" fill="#3f3d3b"/>
    <path d="M135 155 L158 137 L159 139 L137 157Z" fill="#5a5755"/>
  </g>
</g>
<!-- row1 col2 : blue card -->
<rect x="192" y="96" width="96" height="96" fill="#a9b8c5"/>
<!-- row2 col0 : dark overlay -->
<g clip-path="url(#c20)">
  <rect x="0" y="192" width="96" height="96" fill="#5d6262"/>
  <g filter="url(#b1)">
    <path d="M0 194 L40 194 L42 235 L0 240Z" fill="#565b5b"/>
    <ellipse cx="29" cy="213" rx="9" ry="7" fill="#685955"/>
    <path d="M48 224 L68 212 L70 215 L50 227Z" fill="#7b8181"/>
    <path d="M55 212 L60 210 L66 222 L61 224Z" fill="#747a7a"/>
    <path d="M72 216 L94 214 L94 231 L73 231Z" fill="#687373"/>
    <path d="M44 196 L70 196 L70 210 L46 212Z" fill="#646a6b"/>
    <path d="M50 260 L66 258 L68 284 L52 286Z" fill="#7e8383"/>
    <circle cx="69" cy="268" r="7" fill="none" stroke="#6f6555" stroke-width="1.2"/>
    <path d="M0 250 L40 250 L40 288 L0 288Z" fill="#5a5f5f"/>
  </g>
  <circle cx="48" cy="284" r="0.9" fill="#e8e8e8"/>
</g>
<!-- row2 cols1-2 : desk -->
<g clip-path="url(#c21)">
  <rect x="96" y="192" width="192" height="96" fill="#d3bba3"/>
  <g filter="url(#b1)" opacity="0.5">
    <path d="M96 215 L150 220 L150 222 L96 218Z" fill="#bfa58c"/>
    <path d="M96 262 L150 268 L150 270 L96 265Z" fill="#c2a88f"/>
    <path d="M220 270 L288 275 L288 277 L220 273Z" fill="#c0a68d"/>
  </g>
  <g filter="url(#b05)">
    <!-- white paper -->
    <path d="M158 217 L172 192 L196 192 L194 230 L170 230Z" fill="#e2e0de"/>
    <!-- map -->
    <path d="M193 192 L233 192 L288 224 L288 247 L264 281 L216 254 L193 240Z" fill="#e3e1df"/>
    <!-- map colour patches -->
    <g filter="url(#b1)">
    <path d="M195 195 L210 194 L212 201 L204 204 L196 203Z" fill="#d6cf68"/>
    <path d="M197 210 L206 208 L210 220 L203 230 L197 226Z" fill="#dccd62"/>
    <path d="M220 222 L230 220 L236 228 L238 240 L228 244 L222 236Z" fill="#b5c57a"/>
    <path d="M240 224 L250 222 L252 232 L244 236Z" fill="#9fc27e"/>
    <path d="M252 228 L266 226 L268 238 L256 240Z" fill="#e3c456"/>
    <path d="M244 206 L254 205 L255 214 L246 215Z" fill="#e0d070"/>
    <path d="M248 254 L260 253 L262 264 L250 266Z" fill="#e9da7a"/>
    <path d="M226 200 L236 199 L238 204 L228 205Z" fill="#a8d0c4"/>
    <path d="M268 230 L276 228 L278 236 L270 238Z" fill="#e3d48a"/>
    </g>
    <!-- magnifier -->
    <circle cx="233" cy="214" r="7.5" fill="#d8d0b5" stroke="#948670" stroke-width="1.2"/>
    <path d="M236 221 L239 236" stroke="#3a3a3a" stroke-width="1.8"/>
    <!-- camera on map -->
    <rect x="252" y="204" width="20" height="16" rx="3" fill="#8a8886" transform="rotate(25 262 212)"/>
    <rect x="256" y="207" width="10" height="8" rx="2" fill="#4a4846" transform="rotate(25 262 212)"/>
    <circle cx="257" cy="220" r="6.3" fill="#393735"/>
    <!-- laptop screen -->
    <rect x="152" y="229" width="72" height="24" fill="#5b544f"/>
    <rect x="160" y="231" width="56" height="14" fill="#4c4642"/>
    <rect x="166" y="246" width="44" height="5" fill="#433e3b"/>
    <!-- laptop base -->
    <rect x="158" y="252.5" width="60" height="36" fill="#ddd6cf"/>
    <rect x="162" y="254.5" width="52" height="20" fill="#6d6763"/>
    <rect x="162" y="258.5" width="52" height="0.8" fill="#b7b0aa"/>
    <rect x="162" y="262.5" width="52" height="0.8" fill="#b7b0aa"/>
    <rect x="162" y="266.5" width="52" height="0.8" fill="#b7b0aa"/>
    <rect x="162" y="270.5" width="52" height="0.8" fill="#b7b0aa"/>
    <!-- hands -->
    <path d="M169 268 C172 261 180 261 183 268 L185 288 L168 288Z" fill="#d6a98e"/>
    <path d="M194 268 C197 261 205 261 207 268 L208 288 L193 288Z" fill="#d6a98e"/>
    <!-- photos -->
    <path d="M107 208 L122 203 L131 229 L115 234Z" fill="#ece6e2"/>
    <path d="M109 212 L114 210 L121 230 L116 232Z" fill="#4f8f9e"/>
    <path d="M112 206 L120 203 L127 226 L118 228Z" fill="#7a5055"/>
    <path d="M116 199 L135 196 L139 219 L120 222Z" fill="#f3efeb"/>
    <path d="M119 203 L134 200 L137 215 L122 217Z" fill="#5fa3b6"/>
    <!-- plant -->
    <circle cx="142" cy="231" r="6.5" fill="#76a04a"/>
    <circle cx="140" cy="229" r="3" fill="#8ab85a"/>
    <!-- toy plane -->
    <path d="M128 246 L131 248 L118 266 L115 264Z" fill="#efefef"/>
    <path d="M112 255 L130 256 L130 258 L112 257Z" fill="#d8d0c8" opacity="0.8"/>
    <!-- pink -->
    <rect x="129" y="279" width="12" height="9" fill="#cf7088"/>
    <rect x="132" y="281" width="6" height="5" fill="#e8dde0"/>
  </g>
</g>
<!-- white texts -->
<g fill="#f4f4f4" stroke="#f4f4f4" stroke-width="0.18" font-family="Liberation Serif, serif" text-anchor="middle">
  <g transform="translate(48 0) scale(0.9 1)">
  <text x="0" y="41.5" font-size="11">Lorem</text>
  <text x="0" y="50.5" font-size="11">ipsum sed</text>
  <text x="0" y="59" font-size="11">etiam.</text>
  </g>
  <rect x="39" y="62.5" width="19" height="0.8" fill="#c8cccc" opacity="0.6"/>
  <g transform="translate(48 0) scale(0.9 1)">
  <text x="0" y="235.5" font-size="11">Lorem</text>
  <text x="0" y="244.5" font-size="11">ipsum sed</text>
  <text x="0" y="253" font-size="11">etiam.</text>
  </g>
  <rect x="39" y="256.5" width="19" height="0.8" fill="#c8cccc" opacity="0.6"/>
</g>
<g fill="#f4f4f4" font-family="Liberation Serif, serif" font-style="italic" text-anchor="middle">
  <text x="240" y="135.5" font-size="9.6" letter-spacing="0.4">Lorem ipsum</text>
  <text x="240" y="146.5" font-size="9.6" letter-spacing="0.4">sed etiam.</text>
  <rect x="230" y="153" width="18" height="0.7" fill="#e4e9ed" opacity="0.7"/>
  <rect x="233" y="157.5" width="19" height="0.7" fill="#e4e9ed" opacity="0.7"/>
</g>
<!-- doodle -->
<g fill="none" stroke="#f4f4f4" stroke-width="0.8">
  <path d="M226 181 C232 180 240 179 248 178" stroke-dasharray="1.2 1.2"/>
  <path d="M248 178 C256 176 258 170 256 166 C253 161 246 163 248 169 C250 174 262 172 270 168 C274 166 275 164 275 161"/>
  <path d="M223 179 m-3 0 a3 3 0 1 1 6 0 L223 185 Z"/>
  <path d="M275 158 m-3 -3 a3 3 0 1 1 6 0 L275 161 Z"/>
</g>
<!-- airplane -->
<g fill="#f4f4f4">
  <path d="M84 233 L85.5 233 L86 240 L93 243 L93 245 L86 244 L85.8 249 L88 251 L88 252 L81.5 252 L81.5 251 L83.7 249 L83.5 244 L76.5 245 L76.5 243 L83.5 240Z"/>
</g>
</svg>

    <!-- guides -->
    <div class="a" style="left:287.4px;top:26px;width:1.2px;height:435px;background:#3fbba6"></div>
    <div class="a" style="left:383.3px;top:26px;width:1.2px;height:435px;background:#3fbba6"></div>
    <div class="a" style="left:9px;top:191.4px;width:658px;height:1.2px;background:#3fbba6"></div>
    <div class="a" style="left:9px;top:287.2px;width:658px;height:1.2px;background:#3fbba6"></div>
    <!-- status -->
    <div class="a" style="left:0;top:449px;width:70px;height:11px;background:#1b1b1b"></div>
    <div class="a" style="left:26.5px;top:449px;width:1px;height:11px;background:#2e2e2e"></div>
    <span class="a" style="left:3.5px;top:450px;font-family:'Liberation Mono',monospace;font-size:5.8px;line-height:9px;color:#e4e4e4;white-space:nowrap;font-weight:bold">16.67%</span>
    <span class="a" style="left:32px;top:450px;font-family:'Liberation Mono',monospace;font-size:5.6px;line-height:9px;color:#e4e4e4;white-space:nowrap;font-weight:bold">3240 × 3240</span>
  </div>
  <div class="a" style="left:681px;top:59px;width:1px;height:435px;background:#2e2e2e"></div>
  <!-- ICON COLUMN -->
  <div class="a" id="icol" style="left:687px;top:33px;width:21px;height:461px;background:#484848">
    <div class="a" style="left:0;top:1px;width:21px;height:5px;background:#292929"></div>
    <div class="a" style="left:8.5px;top:3px;width:1.3px;height:1.3px;background:#bbb"></div>
    <div class="a" style="left:12px;top:3px;width:1.3px;height:1.3px;background:#bbb"></div>
    <div class="a" style="left:0;top:42px;width:21px;height:2px;background:#2b2b2b"></div>
    <div class="a" style="left:0;top:64.5px;width:21px;height:1.5px;background:#2b2b2b"></div>
    <div class="a" style="left:0;top:103px;width:21px;height:2px;background:#2b2b2b"></div>
    <div class="a" style="left:0;top:139px;width:21px;height:2px;background:#2b2b2b"></div>
    <svg class="a" style="left:5px;top:10px" width="12" height="12" viewBox="0 0 12 12"><circle cx="6" cy="6" r="5" fill="none" stroke="#d8d8d8" stroke-width="1.1"/><rect x="5.4" y="5" width="1.3" height="4" fill="#d8d8d8"/><rect x="5.4" y="3" width="1.3" height="1.2" fill="#d8d8d8"/></svg>
    <svg class="a" style="left:5px;top:28px" width="12" height="10" viewBox="0 0 12 10"><path d="M0.5 1.5h11M0.5 5h11M0.5 8.5h11" stroke="#c8c8c8" stroke-width="0.9"/><rect x="3" y="0.5" width="2" height="2" fill="#ddd"/><rect x="7" y="4" width="2" height="2" fill="#ddd"/><rect x="4" y="7.5" width="2" height="2" fill="#ddd"/></svg>
    <svg class="a" style="left:5px;top:48px" width="12" height="12" viewBox="0 0 12 12"><rect x="1" y="0.5" width="3" height="3" fill="#ccc"/><path d="M11 1 L6 7 L5 6 Z" fill="#e0e0e0"/><path d="M4.8 6.5 C3 7 3 10 1 11.5 C4 11.5 6.5 10 6 7.5Z" fill="#e8e8e8"/></svg>
    <span class="a" style="left:5px;top:68px;font-family:'Liberation Serif',serif;font-size:12px;line-height:14px;color:#dcdcdc">T</span>
    <span class="a" style="left:12px;top:72px;font-family:'Liberation Serif',serif;font-size:9px;line-height:10px;color:#dcdcdc">t</span>
    <span class="a" style="left:5px;top:86px;font-family:'Liberation Serif',serif;font-size:13px;line-height:14px;color:#dcdcdc;font-weight:bold">¶</span>
    <span class="a" style="left:5px;top:109px;font-size:6px;line-height:7px;color:#dcdcdc;font-weight:bold;letter-spacing:-0.3px">CSS</span>
    <svg class="a" style="left:5px;top:124px" width="12" height="10" viewBox="0 0 12 10"><rect x="0.5" y="0.5" width="11" height="9" fill="none" stroke="#ddd" stroke-width="1"/><path d="M1 9 L4 4.5 L6.5 7 L8 5.5 L11 9Z" fill="#e0e0e0"/><circle cx="8.5" cy="3" r="1" fill="#ddd"/></svg>
  </div>
  <div class="a" style="left:708px;top:33px;width:3px;height:461px;background:#2b2b2b"></div>
  <!-- PANELS -->
  <div class="a" id="panels" style="left:711px;top:33px;width:142px;height:461px;background:#484848">
    <div class="a" style="left:0;top:1px;width:142px;height:19px;background:#292929"></div>
    <div class="a" style="left:68px;top:2.5px;width:1.3px;height:1.3px;background:#bbb"></div>
    <div class="a" style="left:71.5px;top:2.5px;width:1.3px;height:1.3px;background:#bbb"></div>
    <div class="a" style="left:0;top:6px;width:42px;height:14px;background:#484848"></div>
    <span class="t" style="left:2px;top:8px;color:#dedede">Cronologia</span>
    <span class="t" style="left:48px;top:8px;color:#dedede">Campioni</span>
    <div class="a" style="left:133px;top:6px;width:9px;height:12px;background:#3a3a3a"></div>
    <div class="a" style="left:136px;top:10px;width:3px;height:4px;background:#9a9a9a"></div>
    <div class="a" style="left:137px;top:20px;width:5px;height:85px;background:#1f1f1f"></div>
    <!-- history rows -->
    <div class="a" style="left:0;top:20px;width:137px;height:85px;background:#3a3a3a"></div>
    <div class="a hr" style="top:20px"></div><span class="t" style="left:1px;top:22px">Apri</span>
    <div class="a hr" style="top:34.3px"></div><span class="t" style="left:1px;top:36.5px">Aggiungi guida</span>
    <div class="a hr" style="top:48.5px"></div><span class="t" style="left:1px;top:50.7px">Muovi guide</span>
    <div class="a hr" style="top:62.8px"></div><span class="t" style="left:1px;top:65px">Aggiungi guida</span>
    <div class="a hr" style="top:77px"></div><span class="t" style="left:1px;top:79.3px">Aggiungi guida</span>
    <div class="a hr" style="top:91.3px;background:#3d3d3d"></div><span class="t" style="left:1px;top:93.5px">Aggiungi guida</span>
    <!-- layers header -->
    <div class="a" style="left:0;top:105px;width:142px;height:15px;background:#292929"></div>
    <div class="a" style="left:0;top:107px;width:25px;height:13px;background:#484848"></div>
    <span class="t" style="left:2px;top:109px;color:#dedede">Livelli</span>
    <span class="t" style="left:31px;top:109px;color:#dedede">Canali</span>
    <span class="t" style="left:60px;top:109px;color:#dedede">Tracciati</span>
    <div class="a" style="left:133px;top:108px;width:9px;height:11px;background:#3a3a3a"></div>
    <div class="a" style="left:136px;top:112px;width:3px;height:4px;background:#9a9a9a"></div>
    <!-- blend -->
    <div class="a" style="left:1px;top:124px;width:69px;height:13px;background:#262626"></div>
    <span class="t" style="left:4px;top:126px">Normale</span>
    <svg class="a" style="left:62px;top:129px" width="5" height="4" viewBox="0 0 5 4"><path d="M0.5 1 L2.5 3 L4.5 1" stroke="#ddd" stroke-width="0.9" fill="none"/></svg>
    <span class="t" style="left:74px;top:126px;color:#c8c8c8">Opacità:</span>
    <div class="a" style="left:102px;top:124px;width:23px;height:13px;background:#262626"></div>
    <span class="t" style="left:104px;top:126px">100%</span>
    <svg class="a" style="left:126px;top:127px" width="7" height="7" viewBox="0 0 7 7"><path d="M0.5 1 L6.5 1 L3.5 6 Z" fill="#e8e8e8"/></svg>
    <span class="t" style="left:1px;top:142px;color:#c0c0c0">Blocca:</span>
    <svg class="a" style="left:26px;top:142px" width="9" height="9" viewBox="0 0 9 9"><rect x="0" y="0" width="9" height="9" fill="#ddd"/><path d="M0 0h2.25v2.25H0zM4.5 0h2.25v2.25H4.5zM2.25 2.25h2.25v2.25H2.25zM6.75 2.25H9v2.25H6.75zM0 4.5h2.25v2.25H0zM4.5 4.5h2.25v2.25H4.5zM2.25 6.75h2.25V9H2.25zM6.75 6.75H9V9H6.75z" fill="#555"/></svg>
    <svg class="a" style="left:38px;top:141px" width="9" height="10" viewBox="0 0 9 10"><path d="M8 0.5 L3.5 6 L2.5 5 Z" fill="#ccc"/><path d="M2.3 5.5 C1 6 1.2 8 0.3 9.3 C2 9 3.5 8 3.3 6.5 Z" fill="#ddd"/></svg>
    <svg class="a" style="left:47px;top:141px" width="9" height="10" viewBox="0 0 9 10"><path d="M4.5 0.5v9M0.5 5h8" stroke="#bbb" stroke-width="0.8"/><path d="M3 2L4.5 0.5L6 2M3 8L4.5 9.5L6 8M2 3.5L0.5 5L2 6.5M7 3.5L8.5 5L7 6.5" stroke="#bbb" stroke-width="0.7" fill="none"/></svg>
    <svg class="a" style="left:57px;top:140px" width="8" height="11" viewBox="0 0 8 11"><path d="M2 5V3.3a2 2 0 0 1 4 0V5" stroke="#e0e0e0" stroke-width="1.1" fill="none"/><rect x="0.5" y="5" width="7" height="5.5" fill="#e6e6e6"/></svg>
    <span class="t" style="left:69px;top:142px;color:#c0c0c0">Riempi:</span>
    <div class="a" style="left:95px;top:140px;width:23px;height:13px;background:#262626"></div>
    <span class="t" style="left:97px;top:142px">100%</span>
    <svg class="a" style="left:119px;top:143px" width="7" height="7" viewBox="0 0 7 7"><path d="M0.5 1 L6.5 1 L3.5 6 Z" fill="#e8e8e8"/></svg>
    <!-- layer row -->
    <div class="a" style="left:0;top:156px;width:137px;height:22px;background:#5a5a5a"></div>
    <svg class="a" style="left:2px;top:163px" width="10" height="7" viewBox="0 0 10 7"><path d="M0.5 3.5 C2.5 0 7.5 0 9.5 3.5 C7.5 7 2.5 7 0.5 3.5Z" fill="none" stroke="#ccc" stroke-width="0.9"/><circle cx="5" cy="3.5" r="1.4" fill="#ccc"/></svg>
    <div class="a" id="thumb" style="left:14px;top:156px;width:22px;height:22px;background:repeating-conic-gradient(#ddd 0 25%,#555 0 50%) 0 0/4px 4px"></div>
    <svg class="a" style="left:15px;top:158px" width="20" height="18" viewBox="0 0 3 3" preserveAspectRatio="none"><rect x="0" y="0" width="1" height="1" fill="#6e787c"/><rect x="1" y="0" width="1" height="1" fill="#66594a"/><rect x="2" y="0" width="1" height="1" fill="#9a8d75"/><rect x="0" y="1" width="1" height="1" fill="#c8bdb4"/><rect x="1" y="1" width="1" height="1" fill="#b8a080"/><rect x="2" y="1" width="1" height="1" fill="#a9b8c5"/><rect x="0" y="2" width="1" height="1" fill="#5c6161"/><rect x="1" y="2" width="1" height="1" fill="#c4ad98"/><rect x="2" y="2" width="1" height="1" fill="#d5cdc4"/></svg>
    <span class="t" style="left:39px;top:163px;color:#d0d0d0">Background</span>
    <!-- bottom bar -->
    <div class="a" style="left:0;top:445px;width:142px;height:1px;background:#3c3c3c"></div>
    <svg class="a" style="left:48px;top:448px" width="10" height="8" viewBox="0 0 10 8"><rect x="0.6" y="2.2" width="4" height="3.6" rx="1" fill="none" stroke="#d0d0d0" stroke-width="1"/><rect x="5.4" y="2.2" width="4" height="3.6" rx="1" fill="none" stroke="#d0d0d0" stroke-width="1"/><rect x="3.5" y="3.5" width="3" height="1" fill="#d0d0d0"/></svg>
    <svg class="a" style="left:62px;top:447px" width="10" height="10" viewBox="0 0 10 10"><path d="M1 8 C2 6 2 3 4 3 M3 5h3M5 8V2.5C5 1.5 6 1 7 1.5" fill="none" stroke="#9a9a9a" stroke-width="1"/><circle cx="8.5" cy="8.5" r="1" fill="#bbb"/></svg>
    <svg class="a" style="left:75px;top:448px" width="10" height="8" viewBox="0 0 10 8"><rect x="0.5" y="0.5" width="9" height="7" fill="#d8d8d8"/><circle cx="5" cy="4" r="1.8" fill="#484848"/></svg>
    <svg class="a" style="left:89px;top:447px" width="10" height="10" viewBox="0 0 10 10"><circle cx="4.5" cy="4.5" r="3.8" fill="none" stroke="#d8d8d8" stroke-width="1"/><path d="M4.5 0.7 A3.8 3.8 0 0 0 4.5 8.3Z" fill="#d8d8d8"/><circle cx="8.5" cy="8.5" r="1" fill="#bbb"/></svg>
    <svg class="a" style="left:102px;top:448px" width="10" height="8" viewBox="0 0 10 8"><path d="M0.5 1 H4 L5 2 H9.5 V7.5 H0.5Z" fill="#d8d8d8"/></svg>
    <svg class="a" style="left:115px;top:447px" width="10" height="10" viewBox="0 0 10 10"><path d="M0.5 0.5 H7 V3 H9.5 V9.5 H3 V7 H0.5Z" fill="none" stroke="#d0d0d0" stroke-width="1"/><rect x="3" y="3" width="4" height="4" fill="#d0d0d0"/></svg>
    <svg class="a" style="left:129px;top:447px" width="9" height="10" viewBox="0 0 9 10"><path d="M0.5 1.5 H8.5 L7.5 9.5 H1.5Z" fill="#dadada"/><rect x="0" y="0.5" width="9" height="1" fill="#dadada"/></svg>
  </div>
  <!-- MENU BAR -->
  <div class="menu">
    <span style="left:5px">Archivio</span>
    <span style="left:40px">Modifica</span>
    <span style="left:77px">Immagine</span>
    <span style="left:119px">Livello</span>
    <span style="left:149px">Selezione</span>
    <span style="left:190px">Filtro</span>
    <span style="left:216px">Visualizza</span>
    <span style="left:257px">Finestra</span>
    <span style="left:292px">Altro</span>
    <div class="a" style="left:314px;top:2px;width:33px;height:13px;background:#c8101b;border-radius:1px"></div>
    <span style="left:317px;color:#fff">Account</span>
    <svg class="a" style="left:350px;top:2px" width="14" height="14" viewBox="0 0 14 14"><circle cx="5" cy="5.4" r="3.3" fill="none" stroke="#d6d6d6" stroke-width="1.3"/><path d="M7.5 8 L11.3 11.5" stroke="#d6d6d6" stroke-width="1.8" stroke-linecap="round"/></svg>
    <svg class="a" style="left:368px;top:3px" width="12" height="12" viewBox="0 0 12 12"><path d="M1.3 4.5V1.3H4.5M7.5 1.3H10.7V4.5M10.7 7.5V10.7H7.5M4.5 10.7H1.3V7.5" fill="none" stroke="#d8d8d8" stroke-width="1.4"/></svg>
    <svg class="a" style="left:802px;top:2px" width="14" height="13" viewBox="0 0 14 13"><ellipse cx="7.5" cy="8.5" rx="5.5" ry="3.8" fill="#d8d8d8"/><path d="M7.5 5 L8.5 1.8 L11 2.5" stroke="#d8d8d8" stroke-width="0.9" fill="none"/><circle cx="11.5" cy="2.5" r="1.2" fill="#d8d8d8"/><circle cx="2.3" cy="6" r="1.3" fill="#d8d8d8"/><circle cx="12.7" cy="6" r="1.3" fill="#d8d8d8"/><circle cx="5.6" cy="8" r="0.9" fill="#484848"/><circle cx="9.4" cy="8" r="0.9" fill="#484848"/></svg>
    <svg class="a" style="left:821px;top:3px" width="12" height="11" viewBox="0 0 24 20"><path d="M23.5 2.3c-.9.4-1.8.6-2.8.8 1-.6 1.8-1.6 2.1-2.7-.9.6-2 1-3.1 1.2C18.8.6 17.5 0 16.1 0c-2.7 0-4.8 2.2-4.8 4.8 0 .4 0 .8.1 1.1C7.4 5.7 3.9 3.8 1.6.9c-.4.7-.7 1.6-.7 2.4 0 1.7.9 3.2 2.2 4-.8 0-1.5-.2-2.2-.6v.1c0 2.3 1.7 4.3 3.9 4.7-.4.1-.8.2-1.3.2-.3 0-.6 0-.9-.1.6 1.9 2.4 3.3 4.5 3.4-1.7 1.3-3.7 2.1-6 2.1-.4 0-.8 0-1.1-.1 2.1 1.4 4.7 2.2 7.4 2.2 8.9 0 13.7-7.4 13.7-13.7v-.6c.9-.7 1.7-1.5 2.4-2.5z" fill="#d8d8d8"/></svg>
    <svg class="a" style="left:837px;top:3px" width="12" height="12" viewBox="0 0 12 12"><circle cx="6" cy="6" r="5.5" fill="#dadada"/><path d="M6.6 12V7.5H8.1L8.3 5.8H6.6V4.8C6.6 4.3 6.8 4 7.4 4H8.3V2.5C8.1 2.5 7.6 2.4 7 2.4 5.8 2.4 5 3.1 5 4.5V5.8H3.6V7.5H5V12Z" fill="#484848"/></svg>
    <span style="left:621px">Informazioni</span>
    <span style="left:670px">Segnala un bug</span>
    <span style="left:727px">Apprendi</span>
    <span style="left:764px">Blog</span>
    <span style="left:786px">API</span>
    <span style="left:864px;top:5.5px;color:#e8e8e8">Ad blocking detected</span>
  </div>
</div>
<div class="a" style="left:860px;top:300px;width:1px;height:160px;background:#45494d"></div>
<svg class="a" style="left:795px;top:495px" width="8" height="11" viewBox="0 0 8 11"><path d="M0.5 0.5 L0.5 8.5 L2.5 6.8 L4 10 L5.3 9.4 L3.9 6.3 L6.5 6.3Z" fill="#f4f4f4" stroke="#222" stroke-width="0.6"/></svg>
</body></html>
